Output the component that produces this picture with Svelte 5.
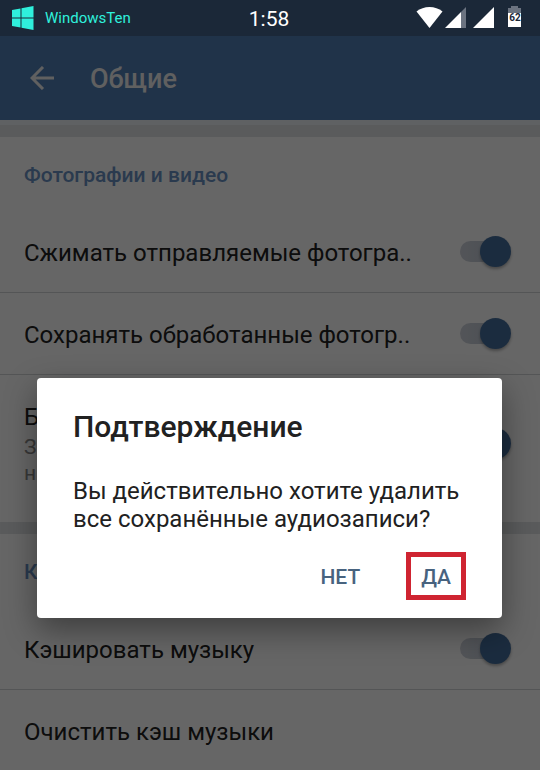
<script lang="ts">
  interface Row {
    id: string;
    title: string;
    hint?: string[];
    checked?: boolean;
  }

  interface Section {
    title: string;
    rows: Row[];
  }

  let sections = $state<Section[]>([
    {
      title: 'Фотографии и видео',
      rows: [
        { id: 'compress', title: 'Сжимать отправляемые фотогра..', checked: true },
        { id: 'save', title: 'Сохранять обработанные фотогр..', checked: true },
        { id: 'browser', title: 'Б', hint: ['З', 'н'], checked: true },
      ],
    },
    {
      title: 'К',
      rows: [
        { id: 'cache', title: 'Кэшировать музыку', checked: true },
        { id: 'clear', title: 'Очистить кэш музыки' },
      ],
    },
  ]);

  let open = $state(true);

  const close = () => (open = false);
</script>

<div class="screen">
  <div class="status">
    <div class="brand">
      <svg width="22" height="24" viewBox="0 0 22 24" fill="currentColor">
        <path d="M0 4l8.500-1.500v9H0zM9.500 2.300L21.500 0v11.500h-12zM0 12.500h8.500v9L0 20zM9.500 12.500h12V24l-12-2.300z" />
      </svg>
      <span>WindowsTen</span>
    </div>
    <time class="clock">1:58</time>
    <div class="indicators">
      <svg width="110" height="24" viewBox="0 0 110 24">
        <path fill="#fff" d="M.5 5.500C7.500-.5 19.500-.5 26.500 5.500L13.500 22z" />
        <path fill="#fff" d="M29 22L45 6v16z" />
        <path fill="#6b7380" d="M45 6l5-5v21h-5z" />
        <path fill="#fff" d="M57 22L78 1v21z" />
        <path fill="#6b7380" d="M95 0h7v2h3v6H92V2h3z" />
        <path fill="#fff" d="M92 7h13v14H92z" />
        <text x="99" y="15" text-anchor="middle">62</text>
      </svg>
    </div>
  </div>

  <header class="toolbar">
    <button class="back" aria-label="Назад">
      <svg width="24" height="24" viewBox="0 0 24 24" fill="none" stroke="currentColor" stroke-width="3">
        <path d="M24 12H2M13 1L2 12l11 11" />
      </svg>
    </button>
    <h1>Общие</h1>
  </header>

  <main>
    {#each sections as section}
      <section>
        <h2>{section.title}</h2>
        {#each section.rows as row}
          <div class="row" class:tall={row.hint}>
            {#if row.checked !== undefined}
              <label for={row.id}>
                {row.title}
                {#if row.hint}
                  <small>
                    {#each row.hint as line}
                      <span>{line}</span>
                    {/each}
                  </small>
                {/if}
              </label>
              <input id={row.id} type="checkbox" bind:checked={row.checked} />
            {:else}
              <button class="action" onclick={() => (open = true)}>{row.title}</button>
            {/if}
          </div>
        {/each}
      </section>
    {/each}
  </main>

  {#if open}
    <div class="scrim">
      <div class="dialog" role="alertdialog" aria-labelledby="dialog-title" aria-describedby="dialog-text">
        <h3 id="dialog-title">Подтверждение</h3>
        <p id="dialog-text">Вы действительно хотите удалить все сохранённые аудиозаписи?</p>
        <div class="actions">
          <button onclick={close}>НЕТ</button>
          <button class="marked" onclick={close}>ДА</button>
        </div>
      </div>
    </div>
  {/if}
</div>

<style>
  :global(body) {
    margin: 0;
    background: #fff;
  }

  .screen {
    position: relative;
    min-height: 100vh;
    overflow: hidden;
    font-family: Roboto, 'Noto Sans', sans-serif;
    font-size: 24px;
    line-height: 28px;
    color: #212121;
    background: #fff;
  }

  h1,
  h2,
  h3,
  p {
    margin: 0;
    font-weight: 500;
  }

  button {
    padding: 0;
    border: 0;
    background: none;
    font: inherit;
    color: inherit;
    cursor: pointer;
  }

  svg {
    display: block;
  }

  /* stays bright above the scrim */
  .status {
    position: relative;
    z-index: 2;
    display: grid;
    grid-template-columns: 1fr auto 1fr;
    align-items: center;
    height: 36px;
    padding: 0 14px 0 12px;
    background: #1b2838;
    color: #fff;
  }

  .brand {
    display: flex;
    align-items: center;
    gap: 11px;
    font-size: 15px;
    color: #2ff0dc;
  }

  .clock {
    padding-top: 2px;
    font-size: 21px;
  }

  .indicators {
    display: flex;
    justify-content: flex-end;
  }

  .indicators text {
    font-size: 10px;
    font-weight: 700;
    fill: #1b2838;
  }

  .toolbar {
    display: flex;
    align-items: center;
    gap: 36px;
    height: 84px;
    padding: 0 30px;
    background: #5280b6;
    color: #fff;
  }

  .back {
    color: #f0f0f0;
  }

  h1 {
    padding-top: 2px;
    font-size: 27px;
    color: #f0f0f0;
  }

  main {
    padding-top: 5px;
    background: #eef3f8;
  }

  section {
    border-top: 12px solid #e0e3e6;
    background: #fff;
  }

  h2 {
    padding: 24px 24px 22px;
    font-size: 21px;
    color: #6a92c4;
  }

  .row {
    display: flex;
    align-items: center;
    justify-content: space-between;
    box-sizing: border-box;
    min-height: 82px;
    padding: 0 29px 0 24px;
    border-bottom: 1px solid #d2d4d6;
  }

  .row:last-child {
    border-bottom: 0;
  }

  label,
  .action {
    padding-top: 2px;
  }

  .tall {
    padding-top: 26px;
    padding-bottom: 36px;
  }

  small {
    display: block;
    padding-top: 3px;
    font-size: 21px;
    line-height: 26px;
    color: #8c8c8c;
  }

  small span {
    display: block;
  }

  .action {
    flex: 1;
    text-align: left;
  }

  input {
    position: relative;
    flex: none;
    width: 51px;
    height: 21px;
    margin: 0;
    border-radius: 11px;
    appearance: none;
    background: linear-gradient(90deg, #d0d4dc, #bcc6d4);
    background-size: 36px 21px;
    background-repeat: no-repeat;
    cursor: pointer;
  }

  input::before {
    content: '';
    position: absolute;
    top: -5px;
    left: 0;
    width: 31px;
    height: 31px;
    border-radius: 50%;
    background: #f0f0f0;
    box-shadow: 0 2px 3px rgba(0, 0, 0, 0.3);
  }

  input:checked::before {
    left: 20px;
    background: #456f9f;
  }

  .scrim {
    position: absolute;
    inset: 0;
    z-index: 1;
    padding: 378px 38px 0 37px;
    background: rgba(0, 0, 0, 0.6);
  }

  .dialog {
    padding: 31px 36px 18px;
    border-radius: 4px;
    background: #fff;
    box-shadow: 0 12px 32px rgba(0, 0, 0, 0.4);
  }

  h3 {
    font-size: 30px;
    line-height: 36px;
  }

  p {
    padding: 32px 0 19px;
    font-weight: 400;
  }

  .actions {
    display: flex;
    justify-content: flex-end;
    gap: 30px;
    color: #48637f;
    font-size: 21px;
    font-weight: 500;
  }

  .actions button {
    height: 48px;
    padding: 2px 16px 0;
  }

  .actions .marked {
    padding: 2px 10px 0;
    border: 5px solid #cf2431;
  }
</style>
